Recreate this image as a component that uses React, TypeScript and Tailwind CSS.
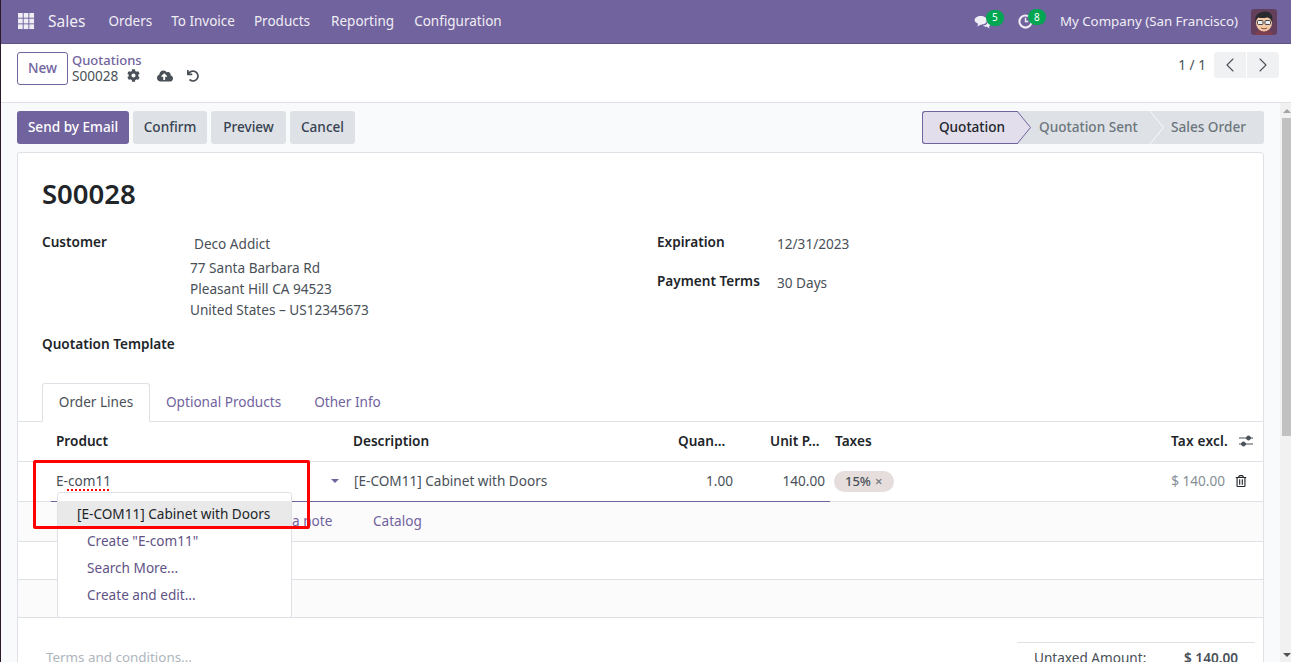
import { ChevronLeft, ChevronRight } from "lucide-react"
import { FaCloudUploadAlt, FaCog, FaRegTrashAlt, FaUndo } from "react-icons/fa"

const FONT = "font-['Noto_Sans',sans-serif]"

function Avatar() {
  return (
    <svg viewBox="0 0 26 26" className="size-[26px] rounded-[3px]">
      <rect width="26" height="26" fill="#633f5c" />
      <path d="M4 26c1-4 5-6 9-6s8 2 9 6z" fill="#7d3f50" />
      <ellipse cx="13" cy="14" rx="8" ry="8.500" fill="#f3c9a8" />
      <path d="M4.500 13C3 5 9 3 14 2.500c5 0 8.500 3 7 10.500-1-3-3-4.500-5-4.500-4 1-7 .5-9 0-1 1-2 2.500-2.500 4.500z" fill="#2b2a2e" />
      <rect x="6.500" y="11.500" width="5.500" height="4" rx="1" fill="#e8eef0" stroke="#333" strokeWidth=".9" />
      <rect x="14" y="11.500" width="5.500" height="4" rx="1" fill="#e8eef0" stroke="#333" strokeWidth=".9" />
      <path d="M10 19q3 2 6 0" stroke="#8b4a3a" fill="none" />
    </svg>
  )
}

function Badge({ n }: { n: number }) {
  return (
    <span className="absolute -right-[13px] -top-[5px] flex h-[16px] w-[18px] items-center justify-center rounded-full bg-[#00a651] text-[10px] text-white">
      {n}
    </span>
  )
}

function StatusArrow({ fill, stroke }: { fill: string; stroke: string }) {
  return (
    <svg viewBox="0 0 14 33" className="h-[33px] w-[14px]" preserveAspectRatio="none">
      <path d="M0 0 L13.500 16.500 L0 33" fill={fill} stroke={stroke} strokeWidth="1" />
    </svg>
  )
}

function FormRow({ label, value }: { label: string; value: string }) {
  return (
    <div className="flex">
      <div className="w-[120px] font-semibold text-[#212529]">{label}</div>
      <div className="mt-[2px] text-[#495057]">{value}</div>
    </div>
  )
}

export default function App() {
  return (
    <div className={`${FONT} relative flex h-[662px] flex-col overflow-hidden border-l border-[#2c1a2a] bg-white text-[13.6px] text-[#495057]`}>
      <nav className="flex h-[44px] shrink-0 items-center border-b border-[#5f5385] bg-[#71639e] pl-[17px] pr-[14px] text-[13.5px] text-[#f0eef5]">
        <svg viewBox="0 0 18 18" className="size-[17px]" fill="#f0eef5">
          {[0, 6, 12].flatMap((y) =>
            [0, 6, 12].map((x) => <rect key={`${x}-${y}`} x={x} y={y} width="5" height="5" />),
          )}
        </svg>
        <span className="ml-[13px] text-[15.5px]">Sales</span>
        <div className="ml-[23px] flex gap-[19px]">
          <span>Orders</span>
          <span>To Invoice</span>
          <span>Products</span>
          <span className="ml-[2px]">Reporting</span>
          <span className="ml-px">Configuration</span>
        </div>
        <div className="ml-auto flex items-center">
          <span className="relative mr-[27px] flex">
            <svg viewBox="0 0 18 16" className="h-[14px] w-[17px]" fill="#f0eef5">
              <path d="M7 1c4 0 7 2 7 5s-3 5-7 5l-4 2 1-3C2 9 0 8 0 6c0-3 3-5 7-5z" />
              <path d="M15 7c2 .6 3 2 3 3.500 0 1-.6 2-1.600 2.600l.6 2.400-3-2c-2 0-3.500-.5-4.500-1.500 3 0 5.500-2 5.500-5z" />
            </svg>
            <Badge n={5} />
          </span>
          <span className="relative mr-[27px] flex">
            <svg viewBox="0 0 16 16" className="size-[15px]" fill="none" stroke="#f0eef5" strokeWidth="2.200">
              <circle cx="8" cy="8" r="6.500" />
              <path d="M8 4v4h3" strokeWidth="1.500" />
            </svg>
            <Badge n={8} />
          </span>
          <span className="text-[13.3px]">My Company (San Francisco)</span>
          <span className="ml-[13px] flex"><Avatar /></span>
        </div>
      </nav>

      <header className="flex h-[59px] shrink-0 border-b border-[#dee2e6] bg-white pl-[16px] pr-[12px] pt-[8px]">
        <button className="h-[33px] w-[51px] rounded-[3px] border border-[#71639e] font-medium text-[#71639e]">New</button>
        <div className="ml-[4px] pt-px leading-[15px]">
          <div className="text-[13px] font-medium text-[#71639e]">Quotations</div>
          <div className="flex h-[15px] items-center text-[#495057]">
            S00028
            <FaCog className="ml-[9px] size-[13px]" />
            <FaCloudUploadAlt className="ml-[17px] size-[16px]" />
            <FaUndo className="ml-[14px] size-[12px]" />
          </div>
        </div>
        <div className="ml-auto flex h-[26px] items-center">
          <span className="mr-[8px]">1 / 1</span>
          <span className="flex h-[26px] w-[32px] items-center justify-center rounded-l-[3px] bg-[#eff1f3]"><ChevronLeft className="size-[24px]" strokeWidth={1.1} /></span>
          <span className="ml-px flex h-[26px] w-[32px] items-center justify-center rounded-r-[3px] bg-[#eff1f3]"><ChevronRight className="size-[24px]" strokeWidth={1.1} /></span>
        </div>
      </header>

      <div className="flex min-h-0 flex-1 bg-[#f9fafb]">
        <main className="min-w-0 flex-1 pl-[16px] pr-[16px] pt-[8px]">
          <div className="flex h-[33px] items-center font-medium">
            <button className="h-[33px] w-[112px] rounded-[3px] bg-[#71639e] text-white">Send by Email</button>
            <button className="ml-[4px] h-[33px] w-[74px] rounded-[3px] bg-[#dee2e6] text-[#374151]">Confirm</button>
            <button className="ml-[4px] h-[33px] w-[75px] rounded-[3px] bg-[#dee2e6] text-[#374151]">Preview</button>
            <button className="ml-[4px] h-[33px] w-[65px] rounded-[3px] bg-[#dee2e6] text-[#374151]">Cancel</button>
            <div className="ml-auto flex h-[33px] items-center whitespace-nowrap rounded-[3px] bg-[#dee2e6]">
              <div className="flex h-[33px] w-[95px] items-center justify-center rounded-l-[3px] border-y border-l border-[#71639e] bg-[#e2deec] pl-[4px] text-[#212529]">Quotation</div>
              <StatusArrow fill="#e2deec" stroke="#71639e" />
              <span className="ml-[8px] w-[100px] text-[#6c757d]">Quotation Sent</span>
              <span className="ml-[11px]"><StatusArrow fill="#dee2e6" stroke="#f8f9fa" /></span>
              <span className="ml-[7px] mr-[17px] w-[76px] text-[#6c757d]">Sales Order</span>
            </div>
          </div>

          <section className="mt-[8px] h-[520px] rounded-t-[3px] border border-[#dee2e6] bg-white pt-[23px]">
            <h1 className="ml-[24px] text-[27.5px] font-semibold leading-[36px] text-[#212529]">S00028</h1>
            <div className="mt-[20px] flex px-[24px]">
              <div className="w-[615px]">
                <div className="flex">
                  <div className="w-[148px] font-semibold text-[#212529]">Customer</div>
                  <div>
                    <div className="mb-[3px] ml-[4px] mt-[2px]">Deco Addict</div>
                    <div className="leading-[21px]">77 Santa Barbara Rd</div>
                    <div className="leading-[21px]">Pleasant Hill CA 94523</div>
                    <div className="leading-[21px]">United States – US12345673</div>
                  </div>
                </div>
                <div className="mt-[14px] font-semibold text-[#212529]">Quotation Template</div>
              </div>
              <div className="flex flex-col gap-[17px]">
                <FormRow label="Expiration" value="12/31/2023" />
                <FormRow label="Payment Terms" value="30 Days" />
              </div>
            </div>

            <div className="mt-[28px] flex h-[39px] border-b border-[#dee2e6] pl-[24px]">
              <div className="flex h-[39px] w-[108px] items-center justify-center rounded-t-[3px] border border-[#dee2e6] border-b-white bg-white">Order Lines</div>
              <div className="ml-[16px] flex items-center text-[#71639e]">Optional Products</div>
              <div className="ml-[33px] flex items-center text-[#71639e]">Other Info</div>
            </div>

            <div className="flex h-[40px] items-center border-b border-[#dee2e6] font-semibold text-[#212529]">
              <span className="ml-[38px] w-[297px]">Product</span>
              <span className="w-[325px]">Description</span>
              <span className="w-[48px] truncate">Quan...</span>
              <span className="ml-[44px] w-[56px]">Unit P...</span>
              <span className="ml-[9px]">Taxes</span>
              <span className="ml-auto tracking-[0.2px]">Tax excl.</span>
              <svg viewBox="0 0 14 14" className="ml-[11px] mr-[10px] size-[14px]" fill="none" stroke="#495057">
                <path d="M0 4h14M0 10h14" />
                <circle cx="9.500" cy="4" r="2" fill="#495057" />
                <circle cx="4.500" cy="10" r="2" fill="#495057" />
              </svg>
            </div>

            <div className="relative flex h-[40px] items-center border-b border-[#dee2e6]">
              <span className="ml-[38px] w-[275px]">E-<span className="underline decoration-[#f00] decoration-dotted decoration-[1.5px] underline-offset-[3px]">com11</span></span>
              <span className="h-0 w-0 border-x-[4px] border-t-[4px] border-x-transparent border-t-[#71639e]" />
              <span className="ml-[15px] w-[325px]">[E-COM11] Cabinet with Doors</span>
              <span className="w-[54px] text-right">1.00</span>
              <span className="w-[92px] text-right">140.00</span>
              <span className="ml-[9px] flex h-[21px] items-center gap-[4px] rounded-full bg-[#e6dddd] pl-[11px] pr-[12px] text-[13px] font-medium">15% <span className="text-[#6c757d]">×</span></span>
              <span className="ml-auto text-[#868e96]">$ 140.00</span>
              <FaRegTrashAlt className="ml-[10px] mr-[16px] size-[12px] text-[#212529]" />
              <span className="absolute bottom-[-1px] left-[33px] h-px w-[779px] bg-[#71639e]" />
            </div>

            <div className="flex h-[40px] items-center border-b border-[#dee2e6] bg-[#fbfbfb] pl-[274px] text-[#71639e]">
              <span className="w-[81px]">a note</span>
              <span>Catalog</span>
            </div>
            <div className="h-[38px] border-b border-[#dee2e6]" />
            <div className="h-[38px] border-b border-[#dee2e6] bg-[#fbfbfb]" />

            <div className="flex pl-[28px] pr-[8px] pt-[24px]">
              <span className="mt-[5px] text-[13.4px] text-[#adb5bd]">Terms and conditions...</span>
              <div className="ml-auto w-[238px] border-t border-[#dee2e6] pt-[5px] text-[#495057]">
                <div className="flex px-[17px]">
                  <span>Untaxed Amount:</span>
                  <span className="ml-auto font-semibold">$ 140.00</span>
                </div>
              </div>
            </div>
          </section>
        </main>

        <aside className="flex w-[11px] shrink-0 flex-col items-end bg-[#f1f1f1]">
          <span className="mt-[6px] h-0 w-0 border-x-[4px] border-b-[4px] border-x-transparent border-b-[#a3a3a3]" />
          <span className="mt-[5px] h-[318px] w-[9px] bg-[#c1c1c1]" />
          <span className="mb-[5px] mt-auto h-0 w-0 border-x-[4px] border-t-[4px] border-x-transparent border-t-[#505050]" />
        </aside>
      </div>

      <div className="absolute left-[56px] top-[492px] w-[235px] rounded-[3px] border border-[#dee2e6] bg-white pb-[8px] pt-[8px]">
        <div className="flex h-[27px] items-center bg-[#e9e9e9] pl-[19px] text-[#212529]">[E-COM11] Cabinet with Doors</div>
        {["Create \"E-com11\"", "Search More...", "Create and edit..."].map((item) => (
          <div key={item} className="flex h-[27px] items-center pl-[29px] text-[#5f5385]">{item}</div>
        ))}
      </div>

      <div className="pointer-events-none absolute left-[32px] top-[460px] h-[69px] w-[277px] rounded-[2px] border-[3px] border-[#ff0000]" />
    </div>
  )
}
